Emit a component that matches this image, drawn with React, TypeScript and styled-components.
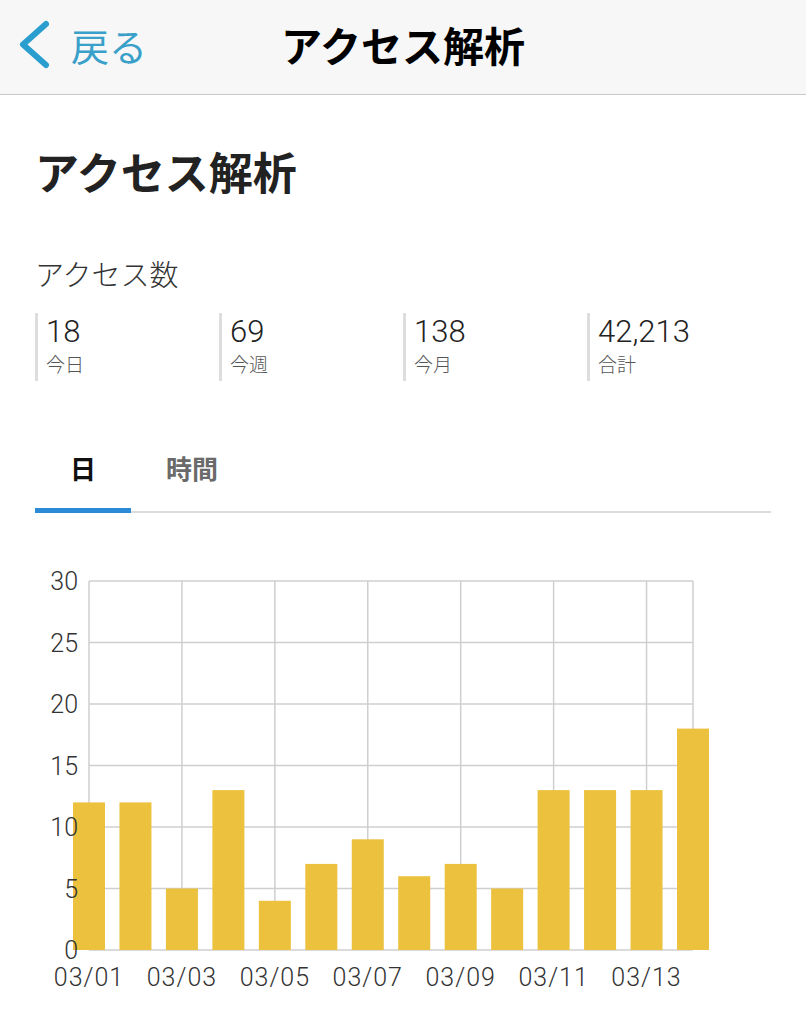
import React, { useState } from 'react';
import styled, { createGlobalStyle } from 'styled-components';

const GlobalStyle = createGlobalStyle`
  body {
    margin: 0;
    background: #ffffff;
    font-family: 'Noto Sans CJK JP', 'Noto Sans', sans-serif;
    color: #222222;
  }
`;

const NavBar = styled.header`
  box-sizing: border-box;
  height: 95px;
  padding-bottom: 5px;
  display: grid;
  grid-template-columns: 1fr auto 1fr;
  align-items: center;
  background: #f7f7f8;
  border-bottom: 1px solid #c9c9cb;
`;

const BackLink = styled.a`
  justify-self: start;
  display: flex;
  align-items: center;
  gap: 22px;
  padding-left: 15px;
  color: #38a0c9;
  font-size: 38px;
  line-height: 1;
  text-decoration: none;
  cursor: pointer;
`;

const NavTitle = styled.h1`
  margin: 0;
  font-size: 41px;
  font-weight: 700;
  color: #000000;
  line-height: 1;
`;

const Content = styled.main`
  padding: 0 35px;
`;

const PageTitle = styled.h2`
  margin: 50px 0 0;
  font-size: 44px;
  line-height: 52px;
  font-weight: 700;
  color: #222222;
`;

const SectionLabel = styled.div`
  margin-top: 58px;
  font-size: 29px;
  line-height: 36px;
  font-weight: 300;
  color: #333333;
`;

const StatsRow = styled.div`
  margin-top: 22px;
  display: grid;
  grid-template-columns: repeat(4, 1fr);
`;

const Stat = styled.div`
  border-left: 3px solid #dddddd;
  padding: 2px 0 5px 8px;
`;

const StatValue = styled.div`
  font-family: Roboto, 'Liberation Sans', sans-serif;
  font-weight: 300;
  font-size: 31px;
  line-height: 34px;
  color: #222222;
`;

const StatCaption = styled.div`
  margin-top: 3px;
  font-size: 19px;
  line-height: 24px;
  font-weight: 300;
  color: #555555;
`;

const TabBar = styled.div`
  margin-top: 71px;
  display: flex;
  border-bottom: 2px solid #dcdcdc;
`;

const Tab = styled.button<{ $active: boolean }>`
  margin: 0 0 -2px;
  padding: 0 35px 24px;
  border: none;
  border-bottom: 5px solid ${({ $active }) => ($active ? '#2b8bd6' : 'transparent')};
  background: none;
  font-family: inherit;
  font-size: 26px;
  line-height: 32px;
  font-weight: 700;
  color: ${({ $active }) => ($active ? '#111111' : '#6a6a6a')};
  cursor: pointer;
`;

const ChartSvg = styled.svg`
  display: block;
  margin-top: 42px;
`;

const stats = [
  { value: '18', label: '今日' },
  { value: '69', label: '今週' },
  { value: '138', label: '今月' },
  { value: '42,213', label: '合計' },
];

const daily = [12, 12, 5, 13, 4, 7, 9, 6, 7, 5, 13, 13, 13, 18];

// plot area in page coordinates
const PLOT = { left: 89, right: 693, top: 581, bottom: 950, max: 30 };
const step = (PLOT.right - PLOT.left) / (daily.length - 1);
const unit = (PLOT.bottom - PLOT.top) / PLOT.max;
const BAR_W = 32;

const BarChart: React.FC<{ values: number[] }> = ({ values }) => {
  const ticks = [0, 5, 10, 15, 20, 25, 30];
  const xAt = (i: number) => PLOT.left + i * step;
  const yAt = (v: number) => PLOT.bottom - v * unit;
  const gridX = values.map((_, i) => i).filter((i) => i % 2 === 0);

  return (
    <ChartSvg width={736} height={460} viewBox="35 555 736 460">
      <g stroke="#cfcfcf" strokeWidth={1.5}>
        {ticks.map((t) => (
          <line key={t} x1={PLOT.left} x2={PLOT.right} y1={yAt(t)} y2={yAt(t)} />
        ))}
        {gridX.map((i) => (
          <line key={i} x1={xAt(i)} x2={xAt(i)} y1={PLOT.top} y2={PLOT.bottom} />
        ))}
        <line x1={PLOT.right} x2={PLOT.right} y1={PLOT.top} y2={PLOT.bottom} />
      </g>
      <g fill="#ebc13e">
        {values.map((v, i) => (
          <rect key={i} x={xAt(i) - BAR_W / 2} y={yAt(v)} width={BAR_W} height={v * unit} />
        ))}
      </g>
      <g fontFamily="Roboto, 'Liberation Sans', sans-serif" fontWeight={300} fontSize={25} fill="#333333">
        {ticks.map((t) => (
          <text key={t} x={78} y={yAt(t) + 9} textAnchor="end">
            {t}
          </text>
        ))}
        {gridX.map((i) => (
          <text key={i} x={xAt(i)} y={986} textAnchor="middle" letterSpacing={1}>
            03/{String(i + 1).padStart(2, '0')}
          </text>
        ))}
      </g>
    </ChartSvg>
  );
};

export default function App() {
  const [tab, setTab] = useState<'day' | 'hour'>('day');

  return (
    <>
      <GlobalStyle />
      <NavBar>
        <BackLink>
          <svg width={34} height={52} viewBox="15 20 34 52">
            <polyline
              points="46,25 23,45.5 46,66"
              fill="none"
              stroke="#2a9fcf"
              strokeWidth={6}
              strokeLinecap="round"
              strokeLinejoin="round"
            />
          </svg>
          戻る
        </BackLink>
        <NavTitle>アクセス解析</NavTitle>
      </NavBar>
      <Content>
        <PageTitle>アクセス解析</PageTitle>
        <SectionLabel>アクセス数</SectionLabel>
        <StatsRow>
          {stats.map((s) => (
            <Stat key={s.label}>
              <StatValue>{s.value}</StatValue>
              <StatCaption>{s.label}</StatCaption>
            </Stat>
          ))}
        </StatsRow>
        <TabBar>
          <Tab $active={tab === 'day'} onClick={() => setTab('day')}>
            日
          </Tab>
          <Tab $active={tab === 'hour'} onClick={() => setTab('hour')}>
            時間
          </Tab>
        </TabBar>
        <BarChart values={daily} />
      </Content>
    </>
  );
}
